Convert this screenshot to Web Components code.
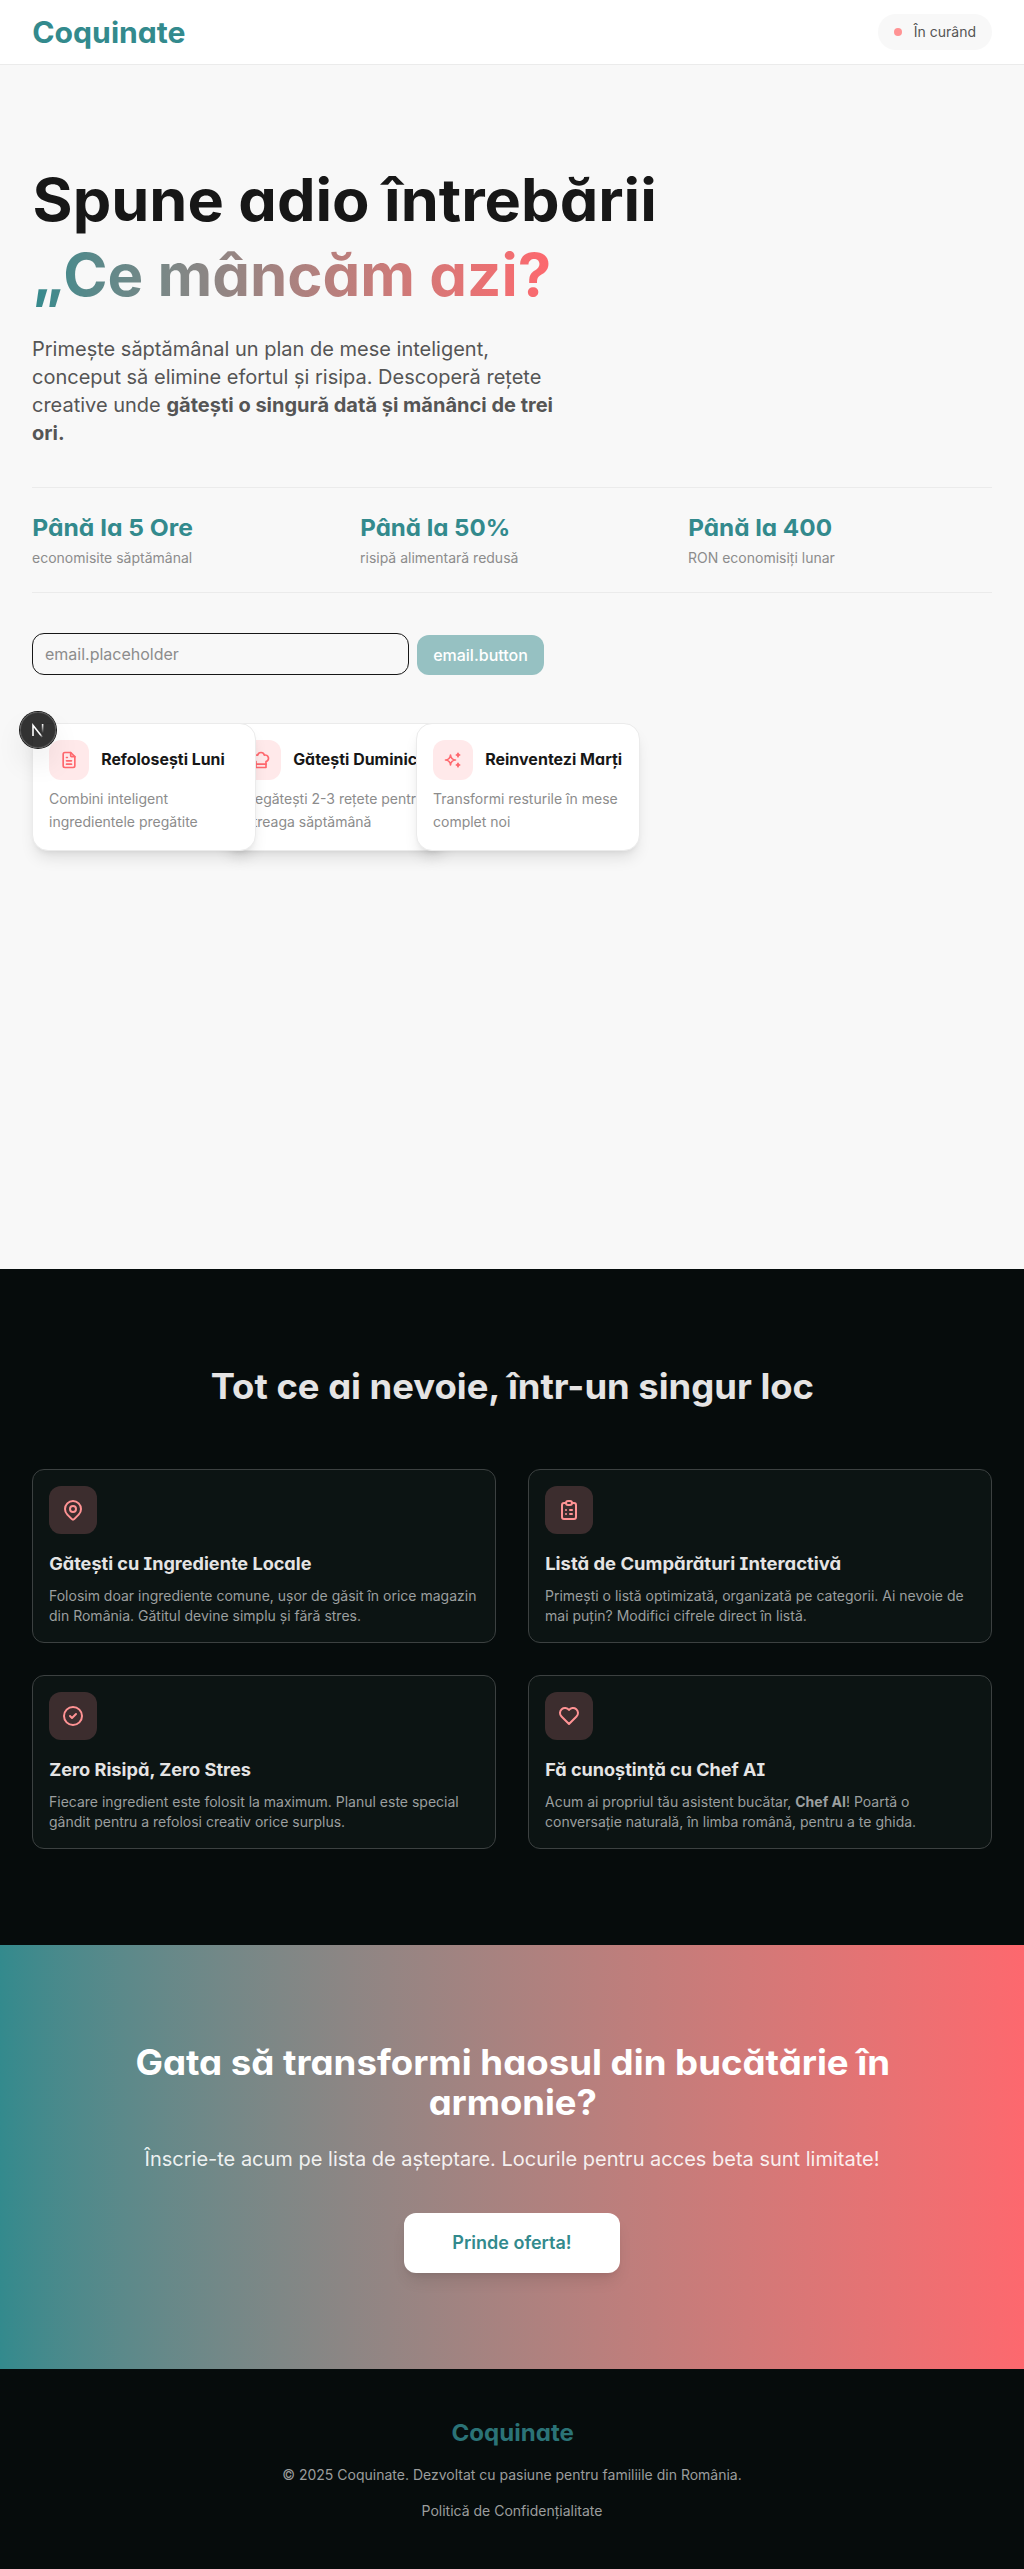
<!DOCTYPE html>
<html lang="ro">
<head>
<meta charset="utf-8">
<title>Coquinate</title>
<style>
html,body{margin:0;padding:0}
body{font-family:Inter,"Liberation Sans",sans-serif;background:#f8f8f8;color:#171717;
--teal:#338a8d;--coral:#fd686e;--night:#060c0c}
</style>
</head>
<body>
<coq-page></coq-page>
<script>
const define = (name, html, setup) => {
  const tpl = document.createElement('template');
  tpl.innerHTML = html;
  customElements.define(name, class extends HTMLElement {
    connectedCallback() {
      if (this.shadowRoot) return;
      this.attachShadow({ mode: 'open' }).append(tpl.content.cloneNode(true));
      if (setup) setup(this, this.shadowRoot);
    }
  });
};

const ICONS = {
  file: ['M14 3v4a1 1 0 0 0 1 1h4', 'M17 21h-10a2 2 0 0 1 -2 -2v-14a2 2 0 0 1 2 -2h7l5 5v11a2 2 0 0 1 -2 2z', 'M9 9l1 0', 'M9 13l6 0', 'M9 17l6 0'],
  chef: ['M12 3c1.918 0 3.52 1.35 3.91 3.151a4 4 0 0 1 2.09 7.723l0 7.126h-12v-7.126a4 4 0 1 1 2.092 -7.723a4 4 0 0 1 3.908 -3.151z', 'M6.161 17.009l11.839 -.009'],
  sparkles: ['M16 18a2 2 0 0 1 2 2a2 2 0 0 1 2 -2a2 2 0 0 1 -2 -2a2 2 0 0 1 -2 2zm0 -12a2 2 0 0 1 2 2a2 2 0 0 1 2 -2a2 2 0 0 1 -2 -2a2 2 0 0 1 -2 2zm-7 12a6 6 0 0 1 6 -6a6 6 0 0 1 -6 -6a6 6 0 0 1 -6 6a6 6 0 0 1 6 6z'],
  pin: ['M9 11a3 3 0 1 0 6 0a3 3 0 0 0 -6 0', 'M17.657 16.657l-4.243 4.243a2 2 0 0 1 -2.827 0l-4.244 -4.243a8 8 0 1 1 11.314 0z'],
  list: ['M9 5h-2a2 2 0 0 0 -2 2v12a2 2 0 0 0 2 2h10a2 2 0 0 0 2 -2v-12a2 2 0 0 0 -2 -2h-2', 'M9 5a2 2 0 0 1 2 -2h2a2 2 0 0 1 2 2a2 2 0 0 1 -2 2h-2a2 2 0 0 1 -2 -2z', 'M9 12l.01 0', 'M13 12l2 0', 'M9 16l.01 0', 'M13 16l2 0'],
  check: ['M3 12a9 9 0 1 0 18 0a9 9 0 1 0 -18 0', 'M9 12l2 2l4 -4'],
  heart: ['M19.5 12.572l-7.5 7.428l-7.5 -7.428a5 5 0 1 1 7.5 -6.566a5 5 0 1 1 7.5 6.572']
};

define('coq-icon', `<style>:host{display:flex}svg{width:100%;height:100%;fill:none;stroke:currentColor;stroke-width:2;stroke-linecap:round;stroke-linejoin:round}</style><svg viewBox="0 0 24 24"></svg>`,
  (host, root) => {
    root.querySelector('svg').innerHTML = ICONS[host.getAttribute('name')].map(d => `<path d="${d}"/>`).join('');
  });

/* Display face: single-storey a, serifed I, widened by the stretch attribute */
define('coq-display', `<style>:host{display:block;font-weight:700}
span{display:block;width:max-content;font-size:.975em;font-feature-settings:"cv11","cv08";white-space:nowrap;transform:translate(.01em,.02em) scaleX(var(--sx,1.03));transform-origin:0 50%}
:host([center]) span{width:auto;text-align:center;transform-origin:50% 50%}
:host([gradient]) span{color:transparent;background:linear-gradient(to right in oklab,var(--teal),var(--coral));-webkit-background-clip:text;background-clip:text}
</style><span><slot></slot></span>`, (host, root) => {
    const s = host.getAttribute('stretch');
    if (s) root.querySelector('span').style.setProperty('--sx', s);
  });

define('coq-header', `<style>
:host{display:flex;align-items:center;justify-content:space-between;height:64px;padding:0 32px;background:#fff;border-bottom:1px solid #ebebeb}
coq-display{font-size:30px;line-height:36px;color:var(--teal)}
.pill{display:flex;align-items:center;gap:12px;padding:8px 16px;border-radius:18px;background:#f8f8f8;font-size:14px;line-height:20px;color:#555}
.dot{width:8px;height:8px;border-radius:50%;background:#ff9394}
</style><coq-display stretch="1.031">Coquinate</coq-display><div class="pill"><span class="dot"></span><span>În curând</span></div>`);

define('coq-stat', `<style>:host{display:block;flex:1}
.value{font-size:24px;line-height:32px;color:var(--teal)}
p{margin:4px 0 0;font-size:14px;line-height:20px;color:#8c8c8c}</style>
<div class="value"><slot name="value"></slot></div><p><slot></slot></p>`);

define('coq-step', `<style>
:host{display:block;box-sizing:border-box;width:224px;padding:16px;border:1px solid #ebebeb;border-radius:16px;background:#fff;position:relative;flex:none;box-shadow:0 10px 15px -3px rgba(0,0,0,.1),0 4px 6px -4px rgba(0,0,0,.1)}
.head{display:flex;align-items:center;gap:12px}
.tile{display:flex;align-items:center;justify-content:center;flex:none;width:40px;height:40px;border-radius:12px;background:#ffe9ea;color:#ff686e}
coq-icon{width:20px;height:20px}
.title{font-size:16px;line-height:20px;color:#171717}
p{margin:8px 0 0;font-size:14px;line-height:22.75px;color:#8c8c8c;white-space:nowrap}
</style><div class="head"><div class="tile"></div><div class="title"><slot name="title"></slot></div></div><p><slot></slot></p>`, (host, root) => {
    root.querySelector('.tile').innerHTML = `<coq-icon name="${host.getAttribute('icon')}"></coq-icon>`;
  });

define('coq-devbadge', `<style>
:host{display:block;position:absolute;left:20px;top:712px;z-index:9;width:36px;height:36px;border-radius:50%;background:rgba(0,0,0,.8);box-shadow:0 0 0 1px #171717,inset 0 0 0 1px rgba(255,255,255,.14),0 16px 32px -8px rgba(0,0,0,.24)}
svg{display:block}
</style><svg width="36" height="36" viewBox="0 0 36 36" fill="none" stroke-width="1.6"><defs>
<linearGradient id="a" gradientUnits="userSpaceOnUse" x1="17" y1="18" x2="23" y2="25"><stop stop-color="#fff"/><stop offset=".6" stop-color="#fff"/><stop offset="1" stop-color="#fff" stop-opacity="0"/></linearGradient>
<linearGradient id="b" gradientUnits="userSpaceOnUse" x1="22" y1="12" x2="22" y2="21"><stop stop-color="#fff"/><stop offset="1" stop-color="#fff" stop-opacity="0"/></linearGradient></defs>
<path d="M13 24V13.3L23 26" stroke="url(#a)"/><path d="M22.6 12v9" stroke="url(#b)"/></svg>`);

define('coq-hero', `<style>
:host{display:block;box-sizing:border-box;height:1204px;padding:96px 32px 0;background:#f8f8f8}
h1{margin:0;font-size:60px;line-height:75px;color:#171717}
.lead{margin:24px 0 0;width:544px;font-size:20px;line-height:28px;color:#555}
.lead b{font-weight:700}
.stats{display:flex;gap:24px;margin-top:40px;padding:24px 0;border:solid #ebebeb;border-width:1px 0}
form{display:flex;align-items:flex-end;gap:8px;margin:40px 0 0;width:512px}
input{box-sizing:border-box;width:377px;height:42px;padding:0 12px;border:1px solid #171717;border-radius:12px;background:transparent;font:16px/24px Inter,sans-serif}
input::placeholder{color:#8c8c8c;opacity:1}
button{flex:1;height:40px;padding:0;border:0;border-radius:12px;background:#96c1c2;color:#fff;font:500 16px/24px Inter,sans-serif}
.steps{display:flex;margin-top:48px}
coq-step+coq-step{margin-left:-32px}
coq-step:nth-child(1){z-index:2}coq-step:nth-child(2){z-index:1}coq-step:nth-child(3){z-index:3}
</style>
<h1><coq-display stretch="1.046">Spune adio întrebării</coq-display><coq-display gradient stretch="1.025">„Ce mâncăm azi?</coq-display></h1>
<p class="lead">Primește săptămânal un plan de mese inteligent, conceput să elimine efortul și risipa. Descoperă rețete creative unde <b>gătești o singură dată și mănânci de trei ori.</b></p>
<div class="stats">
<coq-stat><coq-display slot="value" stretch="1.053">Până la 5 Ore</coq-display>economisite săptămânal</coq-stat>
<coq-stat><coq-display slot="value" stretch="1.029">Până la 50%</coq-display>risipă alimentară redusă</coq-stat>
<coq-stat><coq-display slot="value" stretch="1.038">Până la 400</coq-display>RON economisiți lunar</coq-stat>
</div>
<form><input type="email" placeholder="email.placeholder"><button type="button">email.button</button></form>
<div class="steps">
<coq-step icon="file"><coq-display slot="title" stretch="1.018">Refolosești Luni</coq-display>Combini inteligent<br>ingredientele pregătite</coq-step>
<coq-step icon="chef"><coq-display slot="title" stretch="1.022">Gătești Duminica</coq-display>Pregătești 2-3 rețete pentru<br>întreaga săptămână</coq-step>
<coq-step icon="sparkles"><coq-display slot="title" stretch="1.027">Reinventezi Marți</coq-display>Transformi resturile în mese<br>complet noi</coq-step>
</div>`);

define('coq-feature', `<style>
:host{display:block;padding:16px;border:1px solid #3c4141;border-radius:12px;background:#0c1413}
.tile{display:flex;align-items:center;justify-content:center;width:48px;height:48px;border-radius:12px;background:#3c2d2e;color:#ff9394}
coq-icon{width:24px;height:24px}
h3{margin:16px 0 8px;font-size:18px;line-height:28px;color:#e5e4e4}
p{margin:0;font-size:14px;line-height:20px;color:#9b9f9f}
</style><div class="tile"></div><h3><slot name="title"></slot></h3><p><slot></slot></p>`, (host, root) => {
    root.querySelector('.tile').innerHTML = `<coq-icon name="${host.getAttribute('icon')}"></coq-icon>`;
  });

define('coq-features', `<style>
:host{display:block;padding:96px 32px;background:var(--night)}
h2{margin:0 0 64px;font-size:36px;line-height:40px;color:#e5e4e4}
.grid{display:grid;grid-template-columns:1fr 1fr;gap:32px}
</style>
<h2><coq-display center stretch="1.038">Tot ce ai nevoie, într-un singur loc</coq-display></h2>
<div class="grid">
<coq-feature icon="pin"><coq-display slot="title" stretch="1.032">Gătești cu Ingrediente Locale</coq-display>Folosim doar ingrediente comune, ușor de găsit în orice magazin din România. Gătitul devine simplu și fără stres.</coq-feature>
<coq-feature icon="list"><coq-display slot="title" stretch="1.052">Listă de Cumpărături Interactivă</coq-display>Primești o listă optimizată, organizată pe categorii. Ai nevoie de mai puțin? Modifici cifrele direct în listă.</coq-feature>
<coq-feature icon="check"><coq-display slot="title" stretch="1.037">Zero Risipă, Zero Stres</coq-display>Fiecare ingredient este folosit la maximum. Planul este special gândit pentru a refolosi creativ orice surplus.</coq-feature>
<coq-feature icon="heart"><coq-display slot="title" stretch="1.03">Fă cunoștință cu Chef AI</coq-display>Acum ai propriul tău asistent bucătar, <b>Chef AI</b>! Poartă o conversație naturală, în limba română, pentru a te ghida.</coq-feature>
</div>`);

define('coq-cta', `<style>
:host{display:flex;flex-direction:column;align-items:center;padding:96px 32px;text-align:center;background:linear-gradient(to right in oklab,var(--teal),var(--coral))}
h2{margin:0;font-size:36px;line-height:40px;color:#fff}
p{margin:24px 0 40px;font-size:20px;line-height:28px;color:rgba(255,255,255,.9)}
button{width:216px;height:60px;padding:0;border:0;border-radius:12px;background:#fff;color:var(--teal);font:600 18px/28px Inter,sans-serif;box-shadow:0 10px 15px -3px rgba(0,0,0,.1),0 4px 6px -4px rgba(0,0,0,.1)}
</style>
<h2><coq-display center stretch="1.044">Gata să transformi haosul din bucătărie în</coq-display><coq-display center stretch="1.038">armonie?</coq-display></h2>
<p>Înscrie-te acum pe lista de așteptare. Locurile pentru acces beta sunt limitate!</p>
<button type="button">Prinde oferta!</button>`);

define('coq-footer', `<style>
:host{display:flex;flex-direction:column;align-items:center;gap:16px;padding:48px 32px;background:var(--night);font-size:14px;line-height:20px;color:#9b9d9d}
coq-display{font-size:24px;line-height:32px;color:#2b7377}
</style><coq-display center stretch="1.028">Coquinate</coq-display><span>© 2025 Coquinate. Dezvoltat cu pasiune pentru familiile din România.</span><span>Politică de Confidențialitate</span>`);

define('coq-page', `<style>:host{display:block;position:relative}</style>
<coq-header></coq-header><coq-hero></coq-hero><coq-features></coq-features><coq-cta></coq-cta><coq-footer></coq-footer><coq-devbadge></coq-devbadge>`);
</script>
</body>
</html>
